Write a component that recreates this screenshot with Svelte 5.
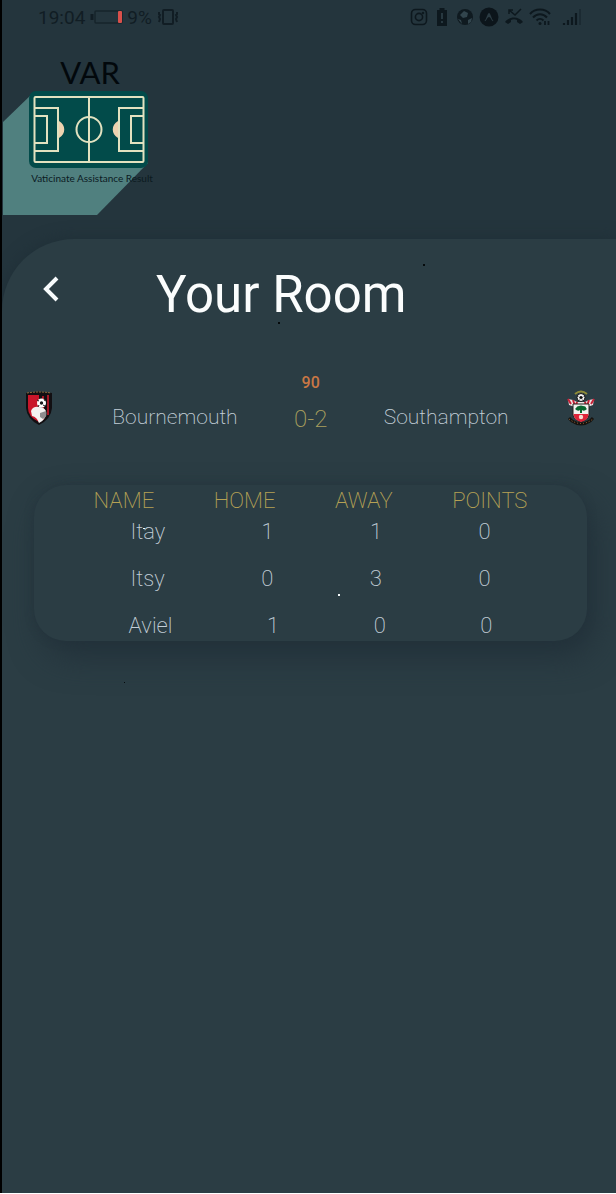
<script>
  const match = { minute: 90, home: 'Bournemouth', away: 'Southampton', score: '0-2' };
  const columns = ['NAME', 'HOME', 'AWAY', 'POINTS'];
  const players = [
    { name: 'Itay', home: 1, away: 1, points: 0 },
    { name: 'Itsy', home: 0, away: 3, points: 0 },
    { name: 'Aviel', home: 1, away: 0, points: 0 }
  ];
</script>

<div class="screen">
  <header>
    <div class="status">
      <div class="left">
        <span>19:04</span>
        <svg class="battery" width="34" height="16" viewBox="0 0 34 16" aria-hidden="true">
          <path d="M3 5v6" stroke="#111d24" stroke-width="3" />
          <rect x="6" y="2" width="27" height="12" rx="1" fill="none" stroke="#16242b" stroke-width="1.5" />
          <rect x="29" y="2" width="4" height="12" rx="1" fill="#d9504b" />
        </svg>
        <span>9%</span>
        <svg width="24" height="18" viewBox="0 0 24 18" fill="none" stroke="#111d24" aria-hidden="true">
          <rect x="7" y="2" width="10" height="14" rx="1" stroke-width="2" />
          <path d="M3 4v2l1 1-1 2 1 2-1 3M21 4v2l-1 1 1 2-1 2 1 3" stroke-width="2" />
        </svg>
      </div>
      <div class="right">
        <svg width="18" height="18" viewBox="0 0 18 18" fill="none" stroke="#0d181e" stroke-width="1.6" aria-hidden="true">
          <rect x="1.5" y="1.5" width="15" height="15" rx="4" />
          <circle cx="9" cy="9" r="3.6" /><circle cx="13" cy="5" r=".5" />
        </svg>
        <svg width="18" height="18" viewBox="0 0 18 18" aria-hidden="true">
          <path d="M6.500 0h5v2h2.500v16h-10v-16h2.500z" fill="#0d181e" />
          <path d="M9 5v6M9 13v2" stroke="#30434c" stroke-width="1.5" />
        </svg>
        <svg width="18" height="18" viewBox="0 0 18 18" aria-hidden="true">
          <circle cx="9" cy="9" r="8" fill="#0f1a20" />
          <path d="M8 3l4 2-1 4-4 1-3-3zM2 11l3 1 1 4zM12 12l4-2-1 4-3 2z" fill="#32454d" />
        </svg>
        <svg width="20" height="20" viewBox="0 0 20 20" aria-hidden="true">
          <circle cx="10" cy="10" r="9.500" fill="#0c151b" />
          <path d="M5.500 14c2-2 3-8 4.500-8s2.500 6 4.500 8c-2 1-2.500-4-4.500-4s-2.500 5-4.500 4z" fill="#2b3b43" />
        </svg>
        <svg width="20" height="20" viewBox="0 0 20 20" aria-hidden="true">
          <path d="M1 15c4-6 14-6 18 0l-3 2-3-2v-2c-2-1-4-1-6 0v2l-3 2z" fill="#0d181e" />
          <path d="M5 3l6 5 6-6M5 7V3h4" fill="none" stroke="#0d181e" stroke-width="1.5" />
        </svg>
        <svg width="22" height="18" viewBox="0 0 22 18" fill="none" stroke="#0d181e" stroke-width="2" aria-hidden="true">
          <path d="M1 6c5-6 15-6 20 0M4 9.500c4-4.500 10-4.500 14 0M7.500 12.500c2-2 5-2 7 0" />
          <circle cx="11" cy="15.500" r="1.500" fill="#0d181e" stroke="none" />
          <path d="M16 13v4M19.500 13v4" stroke-width="1.800" />
        </svg>
        <svg class="signal" width="20" height="18" viewBox="0 0 20 18" aria-hidden="true">
          <path d="M2 17v-2M6 17v-5M10 17v-8M14 17V5" stroke="#0d181e" stroke-width="2.200" />
          <path d="M18 17V1" stroke="#1b2a32" stroke-width="2" />
        </svg>
      </div>
    </div>

    <svg class="logo" width="152" height="158" viewBox="0 0 152 158" role="img" aria-label="VAR, Vaticinate Assistance Result">
      <path d="M0 65L30 36L145 106L94 158H0z" fill="#50807f" />
      <text class="brand" x="87" y="27" text-anchor="middle">VAR</text>
      <rect x="26" y="34" width="119" height="77" rx="7" fill="#024b4a" />
      <g fill="none" stroke="#e2e2c0" stroke-width="2">
        <rect x="31.500" y="40" width="109" height="65" rx="1" />
        <path d="M86 40v65M32 51h23v43H32M32 59h12v27H32M140 51h-24v43h24M140 59h-12v27h12" />
        <circle cx="86" cy="72.500" r="12.500" />
      </g>
      <path d="M56 64c7 4 7 13 0 17zM115 64c-7 4-7 13 0 17z" fill="#efd3b0" />
      <text class="tagline" x="89" y="125" text-anchor="middle">Vaticinate Assistance Result</text>
    </svg>
  </header>

  <main>
    <div class="titlebar">
      <button aria-label="Back">
        <svg width="18" height="28" viewBox="0 0 18 28" fill="none" stroke="#f7fbfc" stroke-width="4" aria-hidden="true">
          <path d="M15 3L4 14l11 11" />
        </svg>
      </button>
      <h1>Your Room</h1>
    </div>

    <section class="match">
      <svg width="32" height="36" viewBox="0 0 32 36" role="img" aria-label="Bournemouth crest">
        <path d="M2 3Q15 0 28 3V18Q27 29 15 35Q3 29 2 18z" fill="#120f12" />
        <path d="M4 5H15V32Q4 27 4 18z" fill="#c9162a" />
        <path d="M18 6h2v24h-2zM23 5h2v20h-2z" fill="#a51624" />
        <path d="M3 3q12-2 24 0" fill="none" stroke="#8c7040" stroke-width="1" stroke-dasharray="2 1" />
        <path d="M7 21Q9 16 15 17Q20 17 22 21Q23 29 15 33Q13 27 8 26z" fill="#f4f1f0" />
        <path d="M16 23l6-2q2 5-3 8l-3-2z" fill="#8f8c8e" />
        <circle cx="17.500" cy="13" r="4.500" fill="#fff" />
        <circle cx="17.500" cy="13" r="1.700" fill="#18181a" />
        <path d="M13 10l2 1M20 9l1 2M21 16l-2-1M14 17l1-2" stroke="#222" />
      </svg>
      <span class="team">{match.home}</span>
      <div class="result">
        <span class="minute">{match.minute}</span>
        <span class="score">{match.score}</span>
      </div>
      <span class="team">{match.away}</span>
      <svg width="32" height="36" viewBox="0 0 32 36" role="img" aria-label="Southampton crest">
        <path d="M10 4q6-5 12 0" fill="none" stroke="#8f8c38" stroke-width="2" />
        <path d="M3 9l5 1 4 2h8l4-2 5-1-1 6-6 2H10l-6-2z" fill="#efe5e5" />
        <path d="M3 9l3 5M8 10l2 6M12 12l-1 4M29 9l-3 5M24 10l-2 6M20 12l1 4" stroke="#c52238" stroke-width="2" />
        <circle cx="16" cy="7.500" r="4" fill="#f5f5f5" stroke="#151515" />
        <path d="M15 6.500h2l.5 1.500-1.500 1-1.500-1zM12.500 5.500l1 1M19.500 5.500l-1 1M14 10.500l.5-1M18 10.500l-.5-1" fill="#111" stroke="#111" stroke-width=".6" />
        <path d="M8 14h16v11q-1 5-8 7q-7-2-8-7z" fill="#f3f1ef" stroke="#24211f" />
        <path d="M8.500 24h15q0 6-7.500 8q-7-2-7.500-8z" fill="#df2339" />
        <path d="M11 18q1-2 3-2q2-1 4 0q3 0 3 2l1 1q-3 3-5 1v3h-2v-3q-2 2-5-1z" fill="#08652f" />
        <circle cx="16" cy="27" r="2.200" fill="#f7d9d1" />
        <path d="M4 28l3 3q9 6 18 0l3-3" fill="none" stroke="#15120f" stroke-width="3" />
        <path d="M4 29q12 9 24 0" fill="none" stroke="#a5703c" stroke-dasharray="1 2" />
      </svg>
    </section>

    <table>
      <thead>
        <tr>{#each columns as column}<th scope="col">{column}</th>{/each}</tr>
      </thead>
      <tbody>
        {#each players as player}
          <tr>
            <td>{player.name}</td>
            <td>{player.home}</td>
            <td>{player.away}</td>
            <td>{player.points}</td>
          </tr>
        {/each}
      </tbody>
    </table>
  </main>

  <svg class="specks" width="616" height="700" viewBox="0 0 616 700" aria-hidden="true">
    <path d="M423 264h2v2h-2zM278 322h2v2h-2zM124 682h1v1h-1z" fill="#050a0c" />
    <path d="M338 594h2v2h-2zM143 528h2v1h-2z" fill="#f5fafa" />
  </svg>
</div>

<style>
  :global(body) {
    margin: 0;
    background: #fff;
  }
  .screen {
    box-sizing: border-box;
    position: relative;
    display: flex;
    flex-direction: column;
    min-height: calc(100vh - 1px);
    border-left: 2px solid #000;
    background: #24353d;
    font-family: Roboto, sans-serif;
    overflow: hidden;
  }
  header {
    display: flex;
    flex-direction: column;
    gap: 23px;
    padding-bottom: 24px;
  }
  .status {
    display: flex;
    justify-content: space-between;
    align-items: center;
    height: 34px;
    padding: 0 34px 0 36px;
    color: #111d24;
    font-size: 19px;
  }
  .left,
  .right {
    display: flex;
    align-items: center;
  }
  .left {
    gap: 4px;
  }
  .right {
    gap: 5px;
  }
  .signal {
    margin-left: 6px;
  }
  .logo {
    margin-left: 1px;
    overflow: visible;
  }
  .brand {
    font: 31px Lato, sans-serif;
    fill: #02080c;
  }
  .tagline {
    font: 10px Lato, sans-serif;
    fill: #0b1a1f;
  }
  main {
    flex: 1;
    padding-top: 24px;
    border-top-left-radius: 72px;
    background: #2b3d44;
    box-shadow: 0 0 16px #1f2f37;
  }
  .titlebar {
    display: flex;
    align-items: center;
    gap: 88px;
    padding-left: 32px;
  }
  button {
    display: flex;
    padding: 0 8px 12px;
    border: 0;
    background: none;
  }
  h1 {
    margin: 0;
    color: #fbfdfd;
    font-size: 51px;
    font-weight: 400;
    line-height: 64px;
  }
  .match {
    display: flex;
    justify-content: space-between;
    align-items: flex-end;
    margin-top: 46px;
    padding: 0 19px 0 22px;
  }
  .match svg {
    margin-bottom: 9px;
  }
  .team {
    color: #c3cfd8;
    font-size: 21px;
    font-weight: 200;
    line-height: 36px;
  }
  .result {
    display: flex;
    flex-direction: column;
    align-items: center;
  }
  .minute {
    color: #c87745;
    font-size: 16px;
    font-weight: 500;
    line-height: 20px;
  }
  .score {
    margin-top: 10px;
    color: #aaa05e;
    font-size: 24px;
    font-weight: 200;
    line-height: 32px;
  }
  table {
    display: block;
    margin: 50px 29px 0 32px;
    border-radius: 32px;
    box-shadow: 8px 16px 32px #22313a, 0 0 8px #27373f;
    background: #2b3d44;
  }
  thead,
  tbody {
    display: block;
  }
  tbody {
    display: flex;
    flex-direction: column;
    gap: 17px;
  }
  tr {
    display: flex;
    justify-content: space-evenly;
  }
  th,
  td {
    padding: 0;
    font-size: 22px;
    font-weight: 200;
    line-height: 30px;
  }
  th {
    color: #b5a154;
    line-height: 32px;
  }
  td {
    color: #c3cfd8;
  }
  .specks {
    position: absolute;
    top: 0;
    left: -2px;
    pointer-events: none;
  }
</style>
